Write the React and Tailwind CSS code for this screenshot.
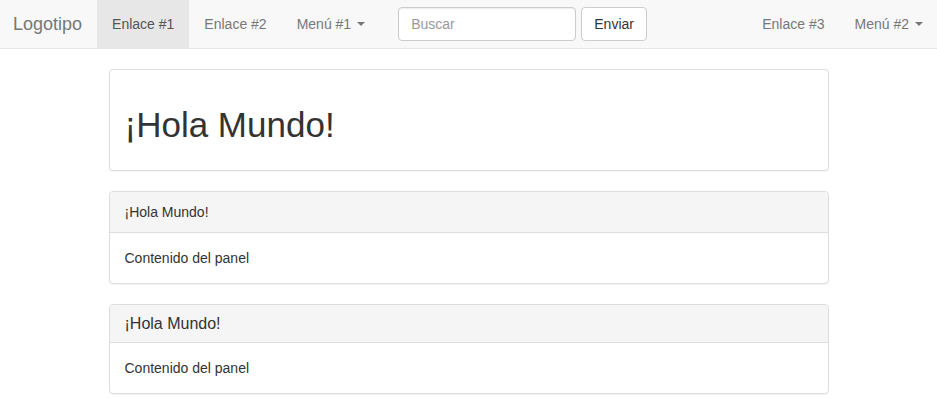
import React from 'react';

const Caret = () => (
  <span className="ml-1.5 inline-block h-0 w-0 border-x-4 border-t-4 border-x-transparent border-t-current align-middle" />
);

const NavLink = ({ children, active, caret }) => (
  <a
    href="#"
    className={
      active
        ? 'flex h-12 items-center bg-[#e7e7e7] px-[15px] text-[#555]'
        : 'flex h-12 items-center px-[15px] text-[#777]'
    }
  >
    {children}
    {caret && <Caret />}
  </a>
);

const Panel = ({ title, big }) => (
  <div className="mb-5 rounded border border-[#ddd] bg-white shadow-[0_1px_1px_rgba(0,0,0,0.05)]">
    <div className="rounded-t border-b border-[#ddd] bg-[#f5f5f5] px-[15px] py-[10px]">
      {big ? (
        <h3 className="text-base leading-[1.1]">{title}</h3>
      ) : (
        <span className="leading-5">{title}</span>
      )}
    </div>
    <div className="p-[15px] leading-5">Contenido del panel</div>
  </div>
);

export default function App() {
  return (
    <div className="min-h-screen bg-white text-sm text-[#333] font-['Liberation_Sans','Helvetica',Arial,sans-serif]">
      <nav className="mb-5 flex h-[49px] items-start border-b border-[#e7e7e7] bg-[#f8f8f8]">
        <a href="#" className="flex h-12 items-center pl-[13px] pr-[15px] text-lg text-[#777]">
          Logotipo
        </a>
        <NavLink active>Enlace #1</NavLink>
        <NavLink>Enlace #2</NavLink>
        <NavLink caret>Menú #1</NavLink>
        <form className="ml-[18px] flex h-12 items-center gap-1">
          <input
            type="text"
            placeholder="Buscar"
            className="h-[34px] w-[178px] rounded border border-[#ccc] bg-white px-3 text-sm text-[#555] shadow-[inset_0_1px_1px_rgba(0,0,0,0.075)] placeholder:text-[#999] outline-none"
          />
          <button
            type="button"
            className="ml-px h-[34px] w-[66px] rounded border border-[#ccc] bg-white text-sm text-[#333]"
          >
            Enviar
          </button>
        </form>
        <div className="ml-auto -mr-px flex">
          <NavLink>Enlace #3</NavLink>
          <NavLink caret>Menú #2</NavLink>
        </div>
      </nav>

      <main className="mx-auto w-[720px]">
        <div className="mb-5 rounded border border-[#ddd] bg-white p-[15px] shadow-[0_1px_1px_rgba(0,0,0,0.05)]">
          <h1 className="mt-5 mb-2.5 text-[35px] leading-[1.13] font-normal">¡Hola Mundo!</h1>
        </div>
        <Panel title="¡Hola Mundo!" />
        <Panel title="¡Hola Mundo!" big />
      </main>
    </div>
  );
}
